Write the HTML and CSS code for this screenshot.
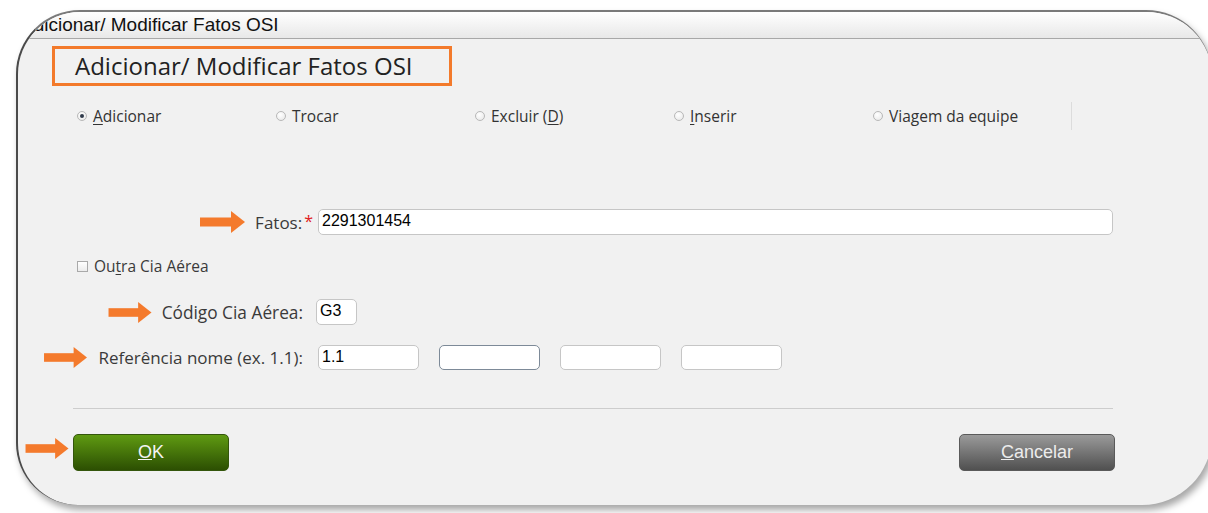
FILE: index.html
```html
<!DOCTYPE html>
<html lang="pt">
<head>
<meta charset="utf-8">
<title>Adicionar/ Modificar Fatos OSI</title>
<link rel="stylesheet" href="styles.css">
</head>
<body>
<div class="frame">
  <div class="titlebar">Adicionar/ Modificar Fatos OSI</div>
  <div class="content">
    <div class="heading">Adicionar/ Modificar Fatos OSI</div>

    <div class="modes">
      <label class="mode"><span class="radio checked"></span><span><u>A</u>dicionar</span></label>
      <label class="mode"><span class="radio"></span><span>Trocar</span></label>
      <label class="mode"><span class="radio"></span><span>Excluir (<u>D</u>)</span></label>
      <label class="mode"><span class="radio"></span><span><u>I</u>nserir</span></label>
      <label class="mode"><span class="radio"></span><span>Viagem da equipe</span></label>
      <span class="modes-end"></span>
    </div>

    <div class="field-row row-fatos">
      <div class="label-cell">
        <svg class="arrow" viewBox="0 0 45 22" width="45" height="22"><rect x="0" y="6.5" width="32" height="9"/><polygon points="31,0 45,11 31,22"/></svg>
        <span class="label">Fatos:</span><span class="req">*</span>
      </div>
      <div class="input wide">2291301454</div>
    </div>

    <div class="check-row">
      <span class="checkbox"></span><span class="check-label">Ou<u>t</u>ra Cia Aérea</span>
    </div>

    <div class="field-row row-code">
      <div class="label-cell">
        <svg class="arrow" viewBox="0 0 45 22" width="44" height="21"><rect x="0" y="6.5" width="32" height="9"/><polygon points="31,0 45,11 31,22"/></svg>
        <span class="label plain code-label">Código Cia Aérea:</span>
      </div>
      <div class="input code">G3</div>
    </div>

    <div class="field-row row-ref">
      <div class="label-cell">
        <svg class="arrow" viewBox="0 0 45 22" width="45" height="21"><rect x="0" y="6.5" width="32" height="9"/><polygon points="31,0 45,11 31,22"/></svg>
        <span class="label plain">Referência nome (ex. 1.1):</span>
      </div>
      <div class="ref-inputs">
        <div class="input ref">1.1</div>
        <div class="input ref focused"></div>
        <div class="input ref"></div>
        <div class="input ref"></div>
      </div>
    </div>

    <div class="separator"></div>

    <div class="btn-row">
      <svg class="arrow" viewBox="0 0 45 22" width="44" height="21"><rect x="0" y="6.5" width="32" height="9"/><polygon points="31,0 45,11 31,22"/></svg>
      <button class="btn btn-ok"><u>O</u>K</button>
      <button class="btn btn-cancel"><u>C</u>ancelar</button>
    </div>
  </div>
</div>
</body>
</html>
```
FILE: styles.css
```css
html, body {
  margin: 0;
  padding: 0;
  background: #ffffff;
  width: 1208px;
  height: 513px;
  overflow: hidden;
}

.frame {
  box-sizing: border-box;
  margin: 10px 0 0 16px;
  width: 1196px;
  height: 495px;
  background: #f1f1f1;
  border-top: 2px solid #7a7a7a;
  border-left: 2px solid #4a4a4a;
  border-radius: 64px 66px 70px 62px;
  box-shadow: 3px 5px 7px rgba(0, 0, 0, 0.35);
  overflow: hidden;
  font-family: "Open Sans", "Noto Sans", sans-serif;
  color: #333;
}

/* window caption */
.titlebar {
  box-sizing: border-box;
  height: 27px;
  padding: 2px 0 0 3px;
  background: linear-gradient(#ffffff, #e8e8e8);
  border-bottom: 1px solid #a8a8a8;
  font-family: "Liberation Sans", Arial, sans-serif;
  font-size: 19px;
  line-height: 22px;
  color: #111;
  white-space: nowrap;
}

.content {
  display: flex;
  flex-direction: column;
  align-items: flex-start;
}

.heading {
  box-sizing: border-box;
  margin: 7px 0 0 34px;
  width: 400px;
  height: 40px;
  padding: 0 0 0 20px;
  border: 3px solid #f37a2b;
  font-size: 24px;
  color: #222;
  line-height: 33px;
  white-space: nowrap;
}

/* mode radios */
.modes {
  display: flex;
  align-items: center;
  margin: 16px 0 0 59px;
  height: 28px;
}
.mode {
  display: flex;
  align-items: center;
  gap: 6px;
  width: 199px;
  font-size: 15.5px;
  color: #333;
}
.mode u, .label u, .check-label u { text-decoration-thickness: 1px; text-underline-offset: 2px; }
.modes-end {
  align-self: stretch;
  width: 0;
  margin-left: -1px;
  border-left: 1px solid #dcdcdc;
}
.radio {
  box-sizing: border-box;
  width: 10px;
  height: 10px;
  border-radius: 50%;
  border: 1px solid #b8b8b8;
  background: radial-gradient(circle at 40% 35%, #ffffff, #e6e6e6);
  position: relative;
}
.radio.checked::after {
  content: "";
  position: absolute;
  left: 2px;
  top: 2px;
  width: 4px;
  height: 4px;
  border-radius: 50%;
  background: #2f3a4a;
}

/* form rows */
.field-row {
  display: flex;
  align-items: center;
}
.label-cell {
  width: 295px;
  display: flex;
  justify-content: flex-end;
  align-items: center;
}
.arrow {
  fill: #f47a2c;
  margin-right: 10px;
  flex: none;
}
.label {
  font-size: 17px;
  color: #3a3a3a;
  white-space: nowrap;
}
.label.plain { margin-right: 10px; }
.label.code-label { font-size: 17.3px; }
.req {
  color: #e02020;
  font-size: 16px;
  margin-left: 2px;
  align-self: flex-start;
  line-height: 18px;
  margin-top: 1px;
}

.input {
  box-sizing: border-box;
  height: 26px;
  background: #ffffff;
  border: 1px solid #c6c6c6;
  border-radius: 5px;
  padding: 0 3px;
  font-family: "Liberation Sans", Arial, sans-serif;
  font-size: 16px;
  line-height: 22px;
  color: #000;
}

.row-fatos { margin-top: 79px; }
.row-fatos .input { margin-left: 5px; }
.input.wide { width: 795px; }

.check-row {
  display: flex;
  align-items: center;
  gap: 6px;
  margin: 23px 0 0 59px;
  height: 16px;
}
.check-label {
  font-size: 15.5px;
  color: #3a3a3a;
}
.checkbox {
  box-sizing: border-box;
  width: 11px;
  height: 11px;
  border: 1px solid #a9a9a9;
  background: linear-gradient(#ffffff, #ececec);
}

.row-code { margin-top: 25px; }
.row-code .input { margin-left: 3px; }
.input.code { width: 41px; }

.row-ref { margin-top: 20px; }
.ref-inputs {
  display: flex;
  gap: 20px;
  margin-left: 5px;
}
.input.ref { width: 101px; height: 25px; }
.input.ref.focused { border-color: #7d8a98; }

.separator {
  margin: 38px 0 0 55px;
  width: 1040px;
  height: 0;
  border-top: 1px solid #cdcdcd;
}

/* buttons */
.btn-row {
  display: flex;
  align-items: center;
  margin: 25px 0 0 7px;
  width: 1090px;
}
.btn-row .arrow { margin-right: 4px; margin-top: -8px; }
.btn {
  box-sizing: border-box;
  width: 156px;
  height: 37px;
  border-radius: 5px;
  font-family: "Liberation Sans", Arial, sans-serif;
  font-size: 18px;
  padding: 0;
}
.btn-ok {
  background: linear-gradient(#5f9a12, #2c4f02);
  border: 1px solid #34560c;
  color: #f4f4f4;
}
.btn-cancel {
  margin-left: auto;
  background: linear-gradient(#9a9a9a, #505050);
  border: 1px solid #5a5a5a;
  color: #ececec;
}
```
